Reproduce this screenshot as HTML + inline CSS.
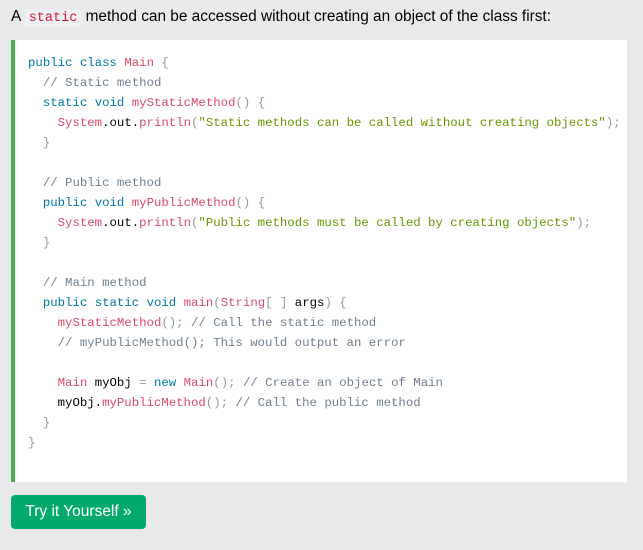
<!DOCTYPE html><html><head><style>
body{margin:0;background:#e7e9eb;font-family:"Liberation Sans",Arial,sans-serif;width:643px;height:550px;overflow:hidden}
p{margin:0;position:absolute;left:11px;top:7px;font-size:15.4px;color:#000;line-height:20px}
p code{font-family:"Liberation Mono",monospace;font-size:13.5px;color:crimson;background:#eef0f2;padding:1px 4px}
.box{position:absolute;left:11px;top:40px;width:612px;height:442px;background:#fff;border-left:4px solid #4caf50}
pre{margin:0;position:absolute;left:13px;top:13px;font-family:"Liberation Mono",monospace;font-size:12.35px;line-height:20px;color:#000}
.k{color:#0077aa}.c{color:#dd4a68}.m{color:#708090}.s{color:#669900}.p{color:#999}
.btn{position:absolute;left:11px;top:495px;width:135px;height:34px;background:#04aa6d;border-radius:4px;color:#fff;font-size:15.5px;line-height:34px;text-align:center}
</style></head><body>
<p>A <code>static</code> method can be accessed without creating an object of the class first:</p>
<div class="box"><pre><span class="k">public</span> <span class="k">class</span> <span class="c">Main</span> <span class="p">{</span>
  <span class="m">// Static method</span>
  <span class="k">static</span> <span class="k">void</span> <span class="c">myStaticMethod</span><span class="p">()</span> <span class="p">{</span>
    <span class="c">System</span>.out.<span class="c">println</span><span class="p">(</span><span class="s">"Static methods can be called without creating objects"</span><span class="p">);</span>
  <span class="p">}</span>

  <span class="m">// Public method</span>
  <span class="k">public</span> <span class="k">void</span> <span class="c">myPublicMethod</span><span class="p">()</span> <span class="p">{</span>
    <span class="c">System</span>.out.<span class="c">println</span><span class="p">(</span><span class="s">"Public methods must be called by creating objects"</span><span class="p">);</span>
  <span class="p">}</span>

  <span class="m">// Main method</span>
  <span class="k">public</span> <span class="k">static</span> <span class="k">void</span> <span class="c">main</span><span class="p">(</span><span class="c">String</span><span class="p">[ ]</span> args<span class="p">)</span> <span class="p">{</span>
    <span class="c">myStaticMethod</span><span class="p">();</span> <span class="m">// Call the static method</span>
    <span class="m">// myPublicMethod(); This would output an error</span>

    <span class="c">Main</span> myObj <span class="p">=</span> <span class="k">new</span> <span class="c">Main</span><span class="p">();</span> <span class="m">// Create an object of Main</span>
    myObj.<span class="c">myPublicMethod</span><span class="p">();</span> <span class="m">// Call the public method</span>
  <span class="p">}</span>
<span class="p">}</span></pre></div>
<div class="btn">Try it Yourself »</div>
</body></html>
